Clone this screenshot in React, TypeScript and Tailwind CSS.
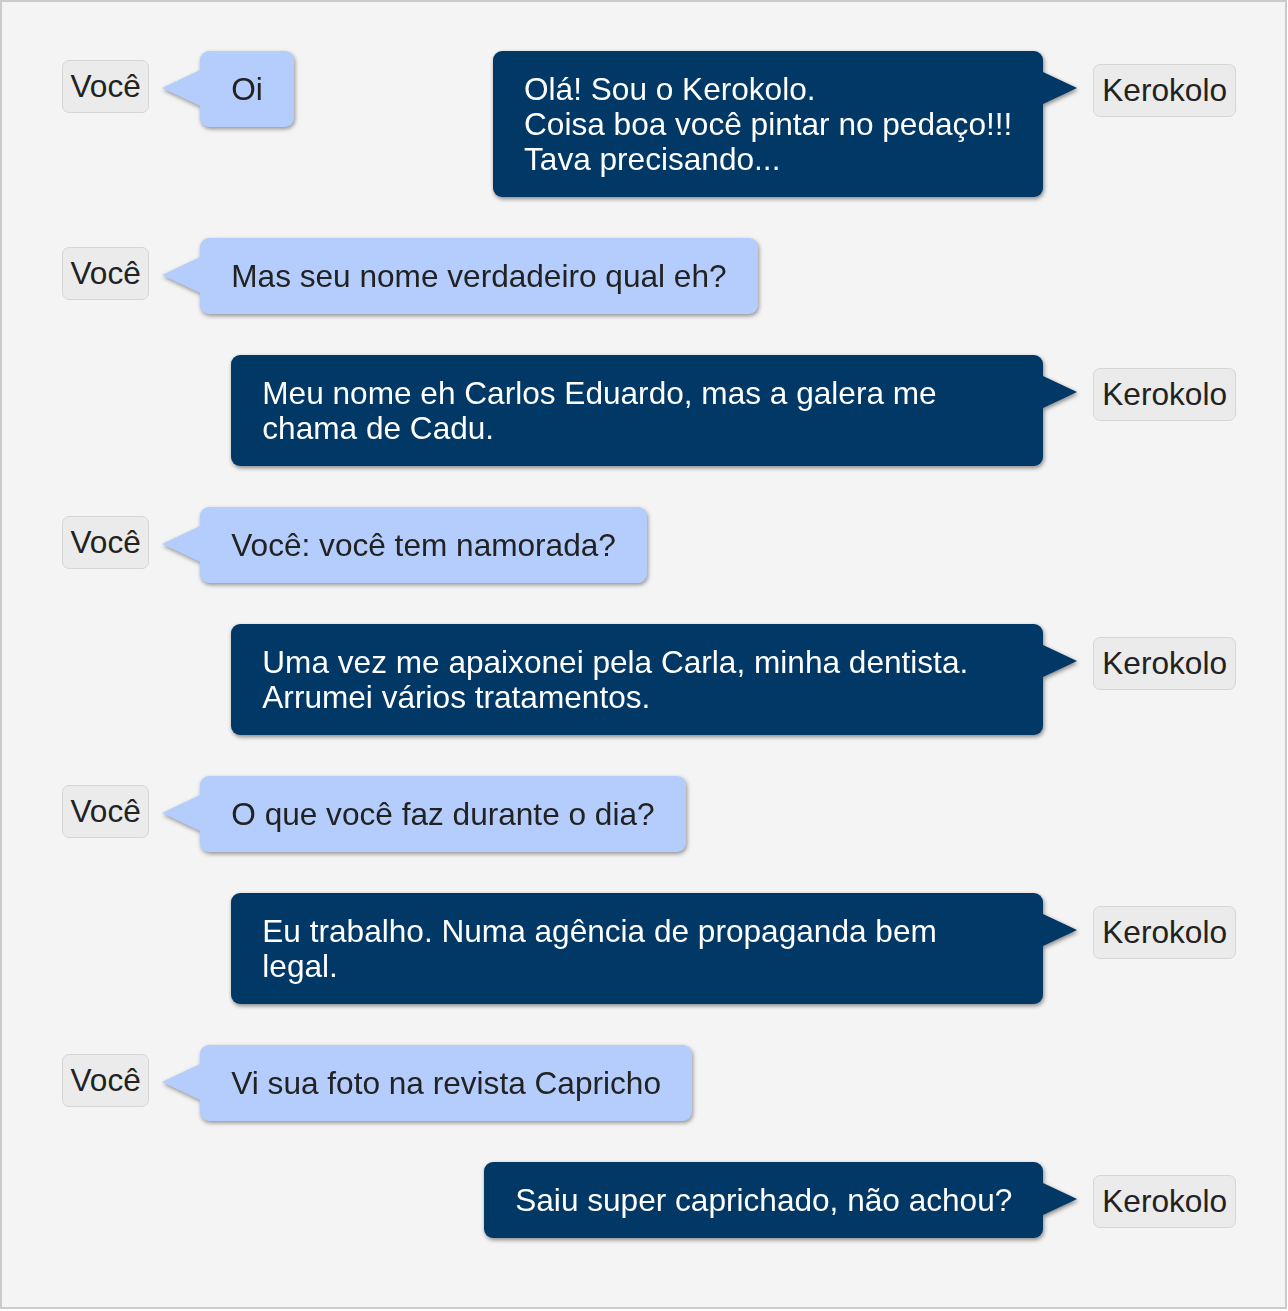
import React from "react";

type Msg = { who: "me" | "bot"; lines: string[] };

const font = "font-['Liberation_Sans',Arial,sans-serif]";

function Label({ text, right }: { text: string; right?: boolean }) {
  return (
    <div
      className={`shrink-0 rounded-[7px] border border-[#d6d6d6] bg-[#ebebeb] py-[8px] text-[31.6px] leading-[35px] text-[#222] ${
        right ? "mt-[13px] px-[8px]" : "mt-[9px] px-[7.5px]"
      }`}
    >
      {text}
    </div>
  );
}

function Mine({ lines }: { lines: string[] }) {
  return (
    <div className="flex items-start">
      <Label text="Você" />
      <div className="ml-[13px] flex items-start drop-shadow-[1px_2px_2px_rgba(0,0,0,0.4)]">
        <div className="mt-[19px] h-0 w-0 border-y-[18px] border-r-[38px] border-y-transparent border-r-[#b4cdfc]" />
        <div className="max-w-[812px] rounded-[9px] bg-[#b4cdfc] px-[31px] py-[20.5px] text-[31.6px] leading-[35px] text-[#222]">
          {lines.map((l, i) => (
            <div key={i}>{l}</div>
          ))}
        </div>
      </div>
    </div>
  );
}

function Bot({ lines }: { lines: string[] }) {
  return (
    <div className="flex items-start">
      <div className="flex items-start drop-shadow-[1px_2px_2px_rgba(0,0,0,0.45)]">
        <div className="max-w-[812px] rounded-[9px] bg-[#023865] px-[31px] py-[20.5px] text-[31.6px] leading-[35px] text-white">
          {lines.map((l, i) => (
            <div key={i}>{l}</div>
          ))}
        </div>
        <div className="mt-[21px] h-0 w-0 border-y-[16px] border-l-[34px] border-y-transparent border-l-[#023865]" />
      </div>
      <div className="ml-[16px]">
        <Label text="Kerokolo" right />
      </div>
    </div>
  );
}

const rows: Msg[] = [
  { who: "me", lines: ["Mas seu nome verdadeiro qual eh?"] },
  { who: "bot", lines: ["Meu nome eh Carlos Eduardo, mas a galera me chama de Cadu."] },
  { who: "me", lines: ["Você: você tem namorada?"] },
  { who: "bot", lines: ["Uma vez me apaixonei pela Carla, minha dentista. Arrumei vários tratamentos."] },
  { who: "me", lines: ["O que você faz durante o dia?"] },
  { who: "bot", lines: ["Eu trabalho. Numa agência de propaganda bem legal."] },
  { who: "me", lines: ["Vi sua foto na revista Capricho"] },
  { who: "bot", lines: ["Saiu super caprichado, não achou?"] },
];

export default function App() {
  return (
    <div className={`${font} h-[1309px] w-[1287px] border-2 border-[#cbcbcb] bg-[#f4f4f4] pb-[68px] pl-[60px] pr-[49px] pt-[49px]`}>
      <div className="flex flex-col gap-[41px]">
        <div className="flex items-start justify-between">
          <Mine lines={["Oi"]} />
          <Bot lines={["Olá! Sou o Kerokolo.", "Coisa boa você pintar no pedaço!!!", "Tava precisando..."]} />
        </div>
        {rows.map((r, i) =>
          r.who === "me" ? (
            <div key={i} className="flex justify-start">
              <Mine lines={r.lines} />
            </div>
          ) : (
            <div key={i} className="flex justify-end">
              <Bot lines={r.lines} />
            </div>
          )
        )}
      </div>
    </div>
  );
}
